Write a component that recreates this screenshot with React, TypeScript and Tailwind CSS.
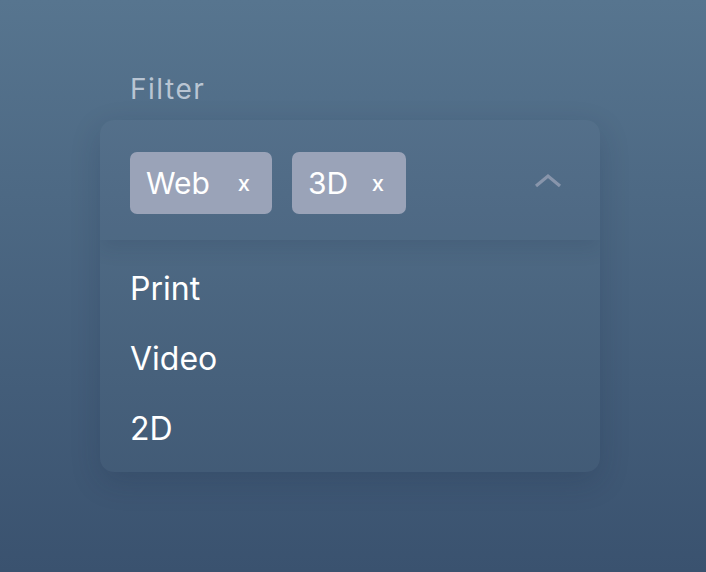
import React from "react";

function Chip({ label, w }: { label: string; w: string }) {
  return (
    <div className={`flex h-[62px] ${w} items-center justify-between rounded-[7px] bg-[#9aa3b8] pl-4 pr-[22px] text-white`}>
      <span className="text-[30px] leading-none">{label}</span>
      <span className="text-[22px] font-medium leading-none">x</span>
    </div>
  );
}

export default function App() {
  return (
    <div
      className="h-[572px] w-[706px] bg-gradient-to-b from-[#57758f] to-[#3a526f]"
      style={{ fontFamily: "Inter, 'Noto Sans', sans-serif" }}
    >
      <div className="pl-[100px] pt-[72px]">
        <div className="pl-[30px] text-[28px] leading-[34px] tracking-[1.5px] text-[#b9c5d3]">Filter</div>
        <div className="mt-[14px] w-[500px] overflow-hidden rounded-[14px] bg-white/[0.02] shadow-[0_10px_30px_rgba(20,35,60,0.18)]">
          <div className="relative z-10 flex h-[120px] items-start gap-5 px-[30px] pt-8 shadow-[0_8px_18px_rgba(30,45,70,0.14)]">
            <Chip label="Web" w="w-[142px]" />
            <Chip label="3D" w="w-[114px]" />
            <div className="ml-auto mr-[7px] mt-[20px]">
              <svg width="30" height="18" viewBox="0 0 30 18" fill="none">
                <path d="M3 14 L15 4 L27 14" stroke="#8895ab" strokeWidth="3.2" />
              </svg>
            </div>
          </div>
          <div className="flex flex-col px-[30px] pb-[8px] pt-[14px] text-[32px] text-white">
            <div className="flex h-[70px] items-center">Print</div>
            <div className="flex h-[70px] items-center">Video</div>
            <div className="flex h-[70px] items-center">2D</div>
          </div>
        </div>
      </div>
    </div>
  );
}
